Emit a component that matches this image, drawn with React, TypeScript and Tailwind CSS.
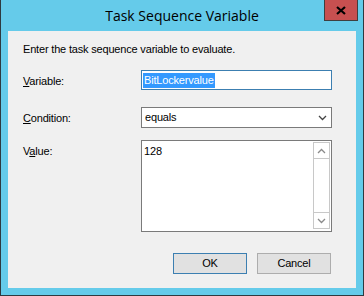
import { useState } from "react";

const font = { fontFamily: '"Liberation Sans", Arial, sans-serif' };

function Chevron({ up, className }: { up?: boolean; className?: string }) {
  return (
    <svg width="9" height="6" viewBox="0 0 9 6" className={className}>
      <path
        d={up ? "M1 5 L4.5 1.5 L8 5" : "M1 1 L4.5 4.5 L8 1"}
        fill="none"
        stroke="currentColor"
        strokeWidth="1.3"
      />
    </svg>
  );
}

export default function App() {
  const [variable] = useState("BitLockervalue");
  const [value] = useState("128");

  return (
    <div
      className="w-[364px] h-[296px] flex flex-col bg-[#65cbea] border-x border-b border-[#2e3a40] overflow-hidden"
      style={font}
    >
      {/* Title bar */}
      <div className="h-[31px] flex items-start relative shrink-0">
        <div className="flex-1 text-center pt-[5px] text-[14px] text-black" style={{ fontFamily: '"Open Sans", "Noto Sans", sans-serif' }}>
          Task Sequence Variable
        </div>
        <div className="absolute right-[5px] top-0 w-[34px] h-[21px] bg-[#c75050] border border-[#3f3f3f] border-t-0 flex items-center justify-center">
          <svg width="10" height="9" viewBox="0 0 10 9">
            <path d="M1 1 L9 8 M9 1 L1 8" stroke="#000" strokeWidth="2.2" />
          </svg>
        </div>
      </div>

      {/* Client area */}
      <div className="mx-[7px] mb-[7px] flex-1 bg-[#f0f0f0] text-[11px] tracking-[-0.18px] text-black flex flex-col">
        <p className="ml-[15px] mt-[12px] leading-[13px]">Enter the task sequence variable to evaluate.</p>

        <div className="flex items-start mt-[14px]">
          <label className="w-[133px] pl-[15px] pt-[5px] leading-[13px]">
            <span className="underline">V</span>ariable:
          </label>
          <div className="w-[191px] h-[20px] bg-white border border-[#3c7fb1] px-[1px] flex items-center">
            <span className="bg-[#3399ff] text-white leading-[15px] px-[1px]">{variable}</span>
          </div>
        </div>

        <div className="flex items-start mt-[17px]">
          <label className="w-[133px] pl-[15px] pt-[5px] leading-[13px]">
            <span className="underline">C</span>ondition:
          </label>
          <div className="w-[191px] h-[21px] bg-white border border-[#7a7a7a] pl-[3px] pr-[4px] flex items-center justify-between">
            <span className="leading-[13px]">equals</span>
            <Chevron className="text-[#444]" />
          </div>
        </div>

        <div className="flex items-start mt-[12px]">
          <label className="w-[133px] pl-[15px] pt-[5px] leading-[13px]">
            V<span className="underline">a</span>lue:
          </label>
          <div className="w-[191px] h-[92px] bg-white border border-[#7a7a7a] flex">
            <div className="flex-1 pl-[2px] pt-[4px] leading-[13px]">{value}</div>
            <div className="w-[17px] mt-[1px] mb-[2px] mr-[1px] border border-[#c8c8c8] flex flex-col">
              <div className="h-[16px] border-b border-[#c8c8c8] flex items-center justify-center text-[#8a8a8a]">
                <Chevron up />
              </div>
              <div className="flex-1" />
              <div className="h-[16px] border-t border-[#c8c8c8] flex items-center justify-center text-[#8a8a8a]">
                <Chevron />
              </div>
            </div>
          </div>
        </div>

        <div className="flex justify-end gap-[10px] mt-[21px] mr-[25px]">
          <button className="w-[74px] h-[21px] bg-[#e1e1e1] border border-[#3c7fb1] leading-[13px]">OK</button>
          <button className="w-[74px] h-[21px] bg-[#e1e1e1] border border-[#adadad] leading-[13px]">Cancel</button>
        </div>
      </div>
    </div>
  );
}
